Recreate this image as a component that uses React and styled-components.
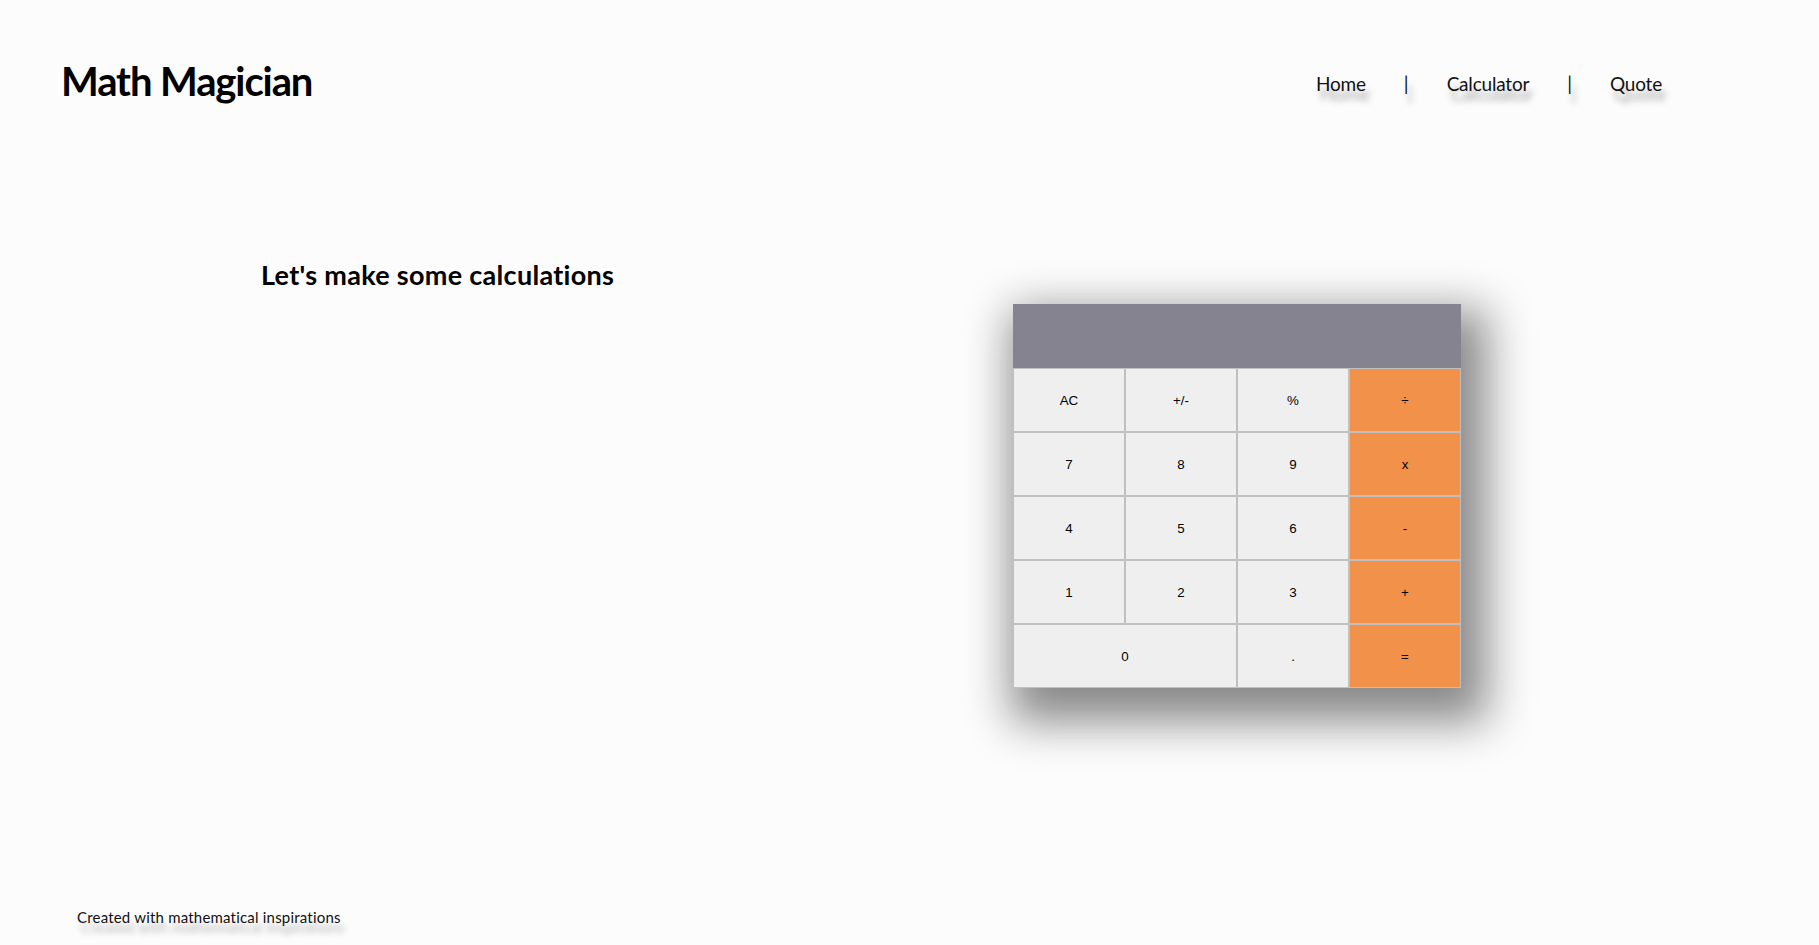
import React from "react";
import styled, { createGlobalStyle } from "styled-components";

const GlobalStyle = createGlobalStyle`
  body {
    margin: 0;
    background: #fcfcfc;
    font-family: Lato, "Open Sans", sans-serif;
    color: #000;
  }
`;

const Page = styled.div`
  display: flex;
  flex-direction: column;
  min-height: 945px;
`;

const Header = styled.header`
  display: flex;
  justify-content: space-between;
  align-items: flex-start;
  padding: 56px 157px 0 61px;
`;

const Logo = styled.h1`
  margin: 0;
  font-size: 40px;
  line-height: 50px;
  font-weight: 700;
  letter-spacing: -1.1px;
`;

const Nav = styled.nav`
  display: flex;
  align-items: center;
  gap: 38px;
  padding-top: 3px;
  font-size: 19px;
  line-height: 50px;
`;

const NavLink = styled.a`
  color: #111;
  text-decoration: none;
  letter-spacing: -0.2px;
  text-shadow: 4px 10px 6px rgba(0, 0, 0, 0.35);
`;

const Divider = styled.span`
  color: #111;
  text-shadow: 4px 10px 6px rgba(0, 0, 0, 0.35);
`;

const Main = styled.main`
  display: flex;
  align-items: flex-start;
  justify-content: space-between;
  margin-top: 149px;
  padding: 0 358px 0 261px;
`;

const Heading = styled.h2`
  margin: 0;
  font-size: 27px;
  line-height: 34px;
  font-weight: 700;
  letter-spacing: 0.3px;
`;

const Calculator = styled.div`
  margin-top: 46px;
  width: 448px;
  display: grid;
  grid-template-columns: repeat(4, 1fr);
  grid-auto-rows: 64px;
  box-shadow: 12px 20px 42px 14px #8a8a8a;
`;

const Screen = styled.div`
  grid-column: 1 / -1;
  background: #84838f;
`;

const Key = styled.button`
  grid-column: span ${(p) => p.$span || 1};
  margin: 0;
  border: 1px solid #c0c0c0;
  background: ${(p) => (p.$op ? "#f2924a" : "#efefef")};
  font-family: "Liberation Sans", Arial, sans-serif;
  font-size: 13.33px;
  color: #000;
  cursor: pointer;
`;

const Footer = styled.footer`
  margin-top: auto;
  padding: 0 0 18px 77px;
  font-size: 15px;
  line-height: 20px;
  letter-spacing: 0.2px;
  color: #111;
  text-shadow: 4px 10px 6px rgba(0, 0, 0, 0.3);
`;

const keys = [
  { label: "AC" },
  { label: "+/-" },
  { label: "%" },
  { label: "÷", op: true },
  { label: "7" },
  { label: "8" },
  { label: "9" },
  { label: "x", op: true },
  { label: "4" },
  { label: "5" },
  { label: "6" },
  { label: "-", op: true },
  { label: "1" },
  { label: "2" },
  { label: "3" },
  { label: "+", op: true },
  { label: "0", span: 2 },
  { label: "." },
  { label: "=", op: true },
];

function App() {
  return (
    <Page>
      <GlobalStyle />
      <Header>
        <Logo>Math Magician</Logo>
        <Nav>
          <NavLink href="#">Home</NavLink>
          <Divider>|</Divider>
          <NavLink href="#">Calculator</NavLink>
          <Divider>|</Divider>
          <NavLink href="#">Quote</NavLink>
        </Nav>
      </Header>
      <Main>
        <Heading>Let's make some calculations</Heading>
        <Calculator>
          <Screen />
          {keys.map((k) => (
            <Key key={k.label} $op={k.op} $span={k.span}>
              {k.label}
            </Key>
          ))}
        </Calculator>
      </Main>
      <Footer>Created with mathematical inspirations</Footer>
    </Page>
  );
}

export default App;
